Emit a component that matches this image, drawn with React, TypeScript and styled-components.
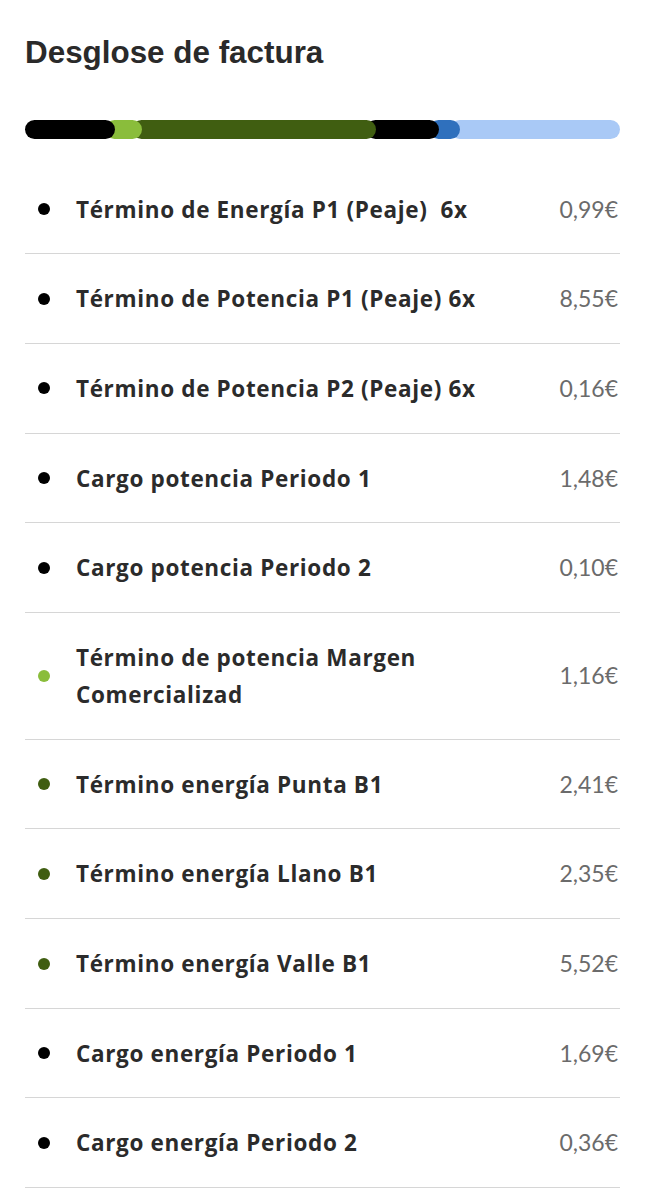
import styled, { createGlobalStyle } from "styled-components";

const GlobalStyle = createGlobalStyle`
  body {
    margin: 0;
    background: #ffffff;
  }
`;

const COLORS = {
  black: "#000000",
  lime: "#8abd3b",
  olive: "#405e11",
  blue: "#2f70bd",
  sky: "#a9c9f6",
};

type ColorKey = keyof typeof COLORS;

interface Segment {
  color: ColorKey;
  size: number;
}

// visible widths of each piece of the bar, in px of a 595px track
const segments: Segment[] = [
  { color: "black", size: 90 },
  { color: "lime", size: 27 },
  { color: "olive", size: 234 },
  { color: "black", size: 63 },
  { color: "blue", size: 21 },
  { color: "sky", size: 160 },
];

interface Item {
  label: string;
  amount: string;
  color: ColorKey;
}

const items: Item[] = [
  { label: "Término de Energía P1 (Peaje)  6x", amount: "0,99€", color: "black" },
  { label: "Término de Potencia P1 (Peaje) 6x", amount: "8,55€", color: "black" },
  { label: "Término de Potencia P2 (Peaje) 6x", amount: "0,16€", color: "black" },
  { label: "Cargo potencia Periodo 1", amount: "1,48€", color: "black" },
  { label: "Cargo potencia Periodo 2", amount: "0,10€", color: "black" },
  { label: "Término de potencia Margen Comercializad", amount: "1,16€", color: "lime" },
  { label: "Término energía Punta B1", amount: "2,41€", color: "olive" },
  { label: "Término energía Llano B1", amount: "2,35€", color: "olive" },
  { label: "Término energía Valle B1", amount: "5,52€", color: "olive" },
  { label: "Cargo energía Periodo 1", amount: "1,69€", color: "black" },
  { label: "Cargo energía Periodo 2", amount: "0,36€", color: "black" },
];

const OVERLAP = 10;
const TRACK = 595;

const Page = styled.div`
  padding: 35px 25px 0;
`;

const Title = styled.h1`
  margin: 0;
  font-family: "Liberation Sans", Arial, sans-serif;
  font-weight: 700;
  font-size: 31.4px;
  line-height: normal;
  color: #2a2a2a;
`;

const Bar = styled.div`
  display: flex;
  height: 19px;
  margin-top: 49px;
`;

const Piece = styled.div<{ $color: ColorKey; $first: boolean }>`
  flex: none;
  height: 100%;
  border-radius: 10px;
  background: ${(p) => COLORS[p.$color]};
  margin-left: ${(p) => (p.$first ? 0 : -OVERLAP)}px;
`;

const List = styled.ul`
  list-style: none;
  margin: 25.5px 0 0;
  padding: 0;
`;

const Row = styled.li`
  display: grid;
  grid-template-columns: 51px 1fr auto;
  align-items: center;
  padding: 26px 2px 25.7px 0;
  border-bottom: 1px solid #d6d6d6;
`;

const Dot = styled.span<{ $color: ColorKey }>`
  width: 12px;
  height: 12px;
  margin-left: 13px;
  border-radius: 50%;
  background: ${(p) => COLORS[p.$color]};
`;

const Label = styled.span`
  max-width: 450px;
  font-family: "Open Sans", "Noto Sans", sans-serif;
  font-weight: 700;
  font-size: 22.5px;
  letter-spacing: 0.65px;
  line-height: 37px;
  color: #2b2b2b;
  white-space: pre-wrap;
`;

const Amount = styled.span`
  font-family: Lato, "Noto Sans", sans-serif;
  font-weight: 400;
  font-size: 23px;
  line-height: 37px;
  color: #6b6b6b;
  text-align: right;
`;

export default function App() {
  return (
    <>
      <GlobalStyle />
      <Page>
        <Title>Desglose de factura</Title>
        <Bar>
          {segments.map((s, i) => (
            <Piece
              key={i}
              $color={s.color}
              $first={i === 0}
              style={{
                width: `${((s.size + (i === 0 ? 0 : OVERLAP)) / TRACK) * 100}%`,
                zIndex: segments.length - i,
              }}
            />
          ))}
        </Bar>
        <List>
          {items.map((item) => (
            <Row key={item.label}>
              <Dot $color={item.color} />
              <Label>{item.label}</Label>
              <Amount>{item.amount}</Amount>
            </Row>
          ))}
        </List>
      </Page>
    </>
  );
}
